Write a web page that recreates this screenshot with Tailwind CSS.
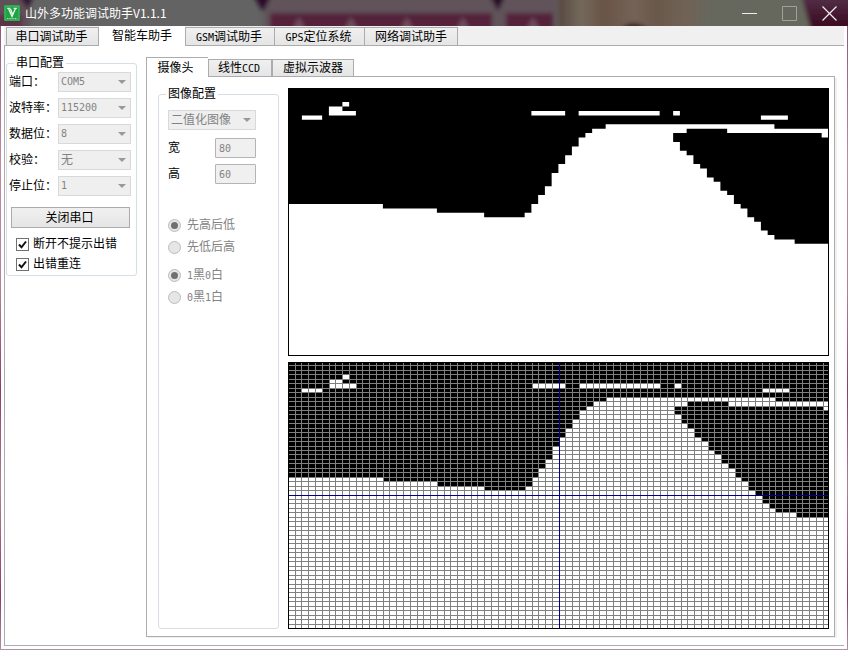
<!DOCTYPE html>
<html lang="zh-CN">
<head>
<meta charset="utf-8">
<title>山外多功能调试助手V1.1.1</title>
<script src="https://cdn.jsdelivr.net/npm/@tailwindcss/browser@4"></script>
</head>
<body class="flex min-h-screen flex-col bg-[linear-gradient(180deg,#8f4a6e,#c08ba5_25%,#b87c98_45%,#8d3b66_60%,#b87c98_75%,#8d3b66_92%,#b390a5)] font-['Liberation_Sans','Noto_Sans_CJK_SC',sans-serif] text-[12px] leading-4 text-black">

<header class="relative isolate flex h-[26px] shrink-0 items-center overflow-hidden bg-[#636363] pl-1 text-white">
  <svg class="absolute inset-0 -z-10 h-full w-full" viewBox="0 0 848 26" preserveAspectRatio="none" aria-hidden="true">
    <defs>
      <filter id="soft" x="-5%" y="-50%" width="110%" height="200%"><feGaussianBlur stdDeviation="2"/></filter>
      <linearGradient id="brown"><stop stop-color="#57483f"/><stop offset=".15" stop-color="#74695c"/><stop offset=".3" stop-color="#6a5448"/><stop offset=".5" stop-color="#746356"/><stop offset=".65" stop-color="#6a584b"/><stop offset=".85" stop-color="#706356"/><stop offset="1" stop-color="#66675d"/></linearGradient>
      <linearGradient id="wine" x2="0" y2="1"><stop stop-color="#54334a"/><stop offset="1" stop-color="#38041c"/></linearGradient>
    </defs>
    <g filter="url(#soft)">
      <path d="M-5-5H30V30H-5z" fill="#614f56"/>
      <path d="M-5 15H22V30H-5z" fill="#5b3346"/>
      <path d="M18-5h16l-6 14z" fill="#321730"/>
      <path d="M264-5H556V30H264z" fill="#61535a"/>
      <path d="M270 13H492V30H270zM506 13H553V30H506z" fill="#54223a"/>
      <path d="M292 30l7-13 7 13zM344 30l7-13 7 13zM400 30l7-13 7 13zM456 30l7-13 7 13zM526 30l7-13 7 13z" fill="#70505f"/>
      <path d="M253-5h19l-9 17zM489-5h17l-8 16z" fill="#2c0a2b"/>
      <path d="M558-5H710V30H558z" fill="url(#brown)"/>
      <path d="M620 30q12-14 30 0z" fill="#3c2327"/>
      <path d="M706-5H804L812 30H706z" fill="#66675d"/>
      <path d="M801-5H855V30H811z" fill="url(#wine)"/>
    </g>
  </svg>
  <svg class="h-4 w-4" viewBox="0 0 16 16" aria-hidden="true">
    <rect width="16" height="16" fill="#15983b"/>
    <rect x="1" y="1" width="14" height="14" fill="#20a346" stroke="#6fcb8c" stroke-width=".6"/>
    <path d="M3 3.300h3.500M9.500 3.300h3.500" stroke="#f2fff4"/>
    <path d="M4.500 3.500L8 11.500 11.500 3.500M6.500 4l2 5" fill="none" stroke="#f2fff4" stroke-width="1.200"/>
    <path d="M3 13.500h10" stroke="#a5dfb6" stroke-dasharray="1 .6"/>
  </svg>
  <h1 class="ml-[5px] flex-1 font-['Noto_Sans_CJK_SC',sans-serif]">山外多功能调试助手V1.1.1</h1>
  <div class="flex gap-6 pr-[10px]">
    <button type="button" aria-label="最小化" class="h-4 w-4"><svg viewBox="0 0 16 16" class="h-4 w-4"><path d="M0 8.500h15" stroke="#eee"/></svg></button>
    <button type="button" aria-label="最大化" class="h-4 w-4"><svg viewBox="0 0 16 16" class="h-4 w-4"><path d="M.5 1.500h14v14H.5z" fill="none" stroke="#a3a09c"/></svg></button>
    <button type="button" aria-label="关闭" class="h-4 w-4"><svg viewBox="0 0 16 16" class="h-4 w-4"><path d="M.5 1.500l14 14M14.500 1.500l-14 14" stroke="#f3edf0" stroke-width="1.200"/></svg></button>
  </div>
</header>

<div class="mx-px mb-px flex flex-1 flex-col bg-white px-[3px] pb-[3px]">
  <nav class="flex h-5 shrink-0 items-end border-b border-[#acacac] bg-[#f0f0f0] pl-[2px]">
    <button type="button" class="h-[18px] w-[93px] border border-b-0 border-[#acacac] bg-linear-to-b from-[#f0f0f0] to-[#e5e5e5] pr-[2px] pt-px">串口调试助手</button>
    <button type="button" class="-mb-px h-5 w-[86px] bg-white">智能车助手</button>
    <button type="button" class="h-[18px] w-[90px] border border-b-0 border-[#acacac] bg-linear-to-b from-[#f0f0f0] to-[#e5e5e5] pr-[2px] pt-px"><span class="font-['DejaVu_Sans_Mono',monospace] text-[10px]">GSM</span>调试助手</button>
    <button type="button" class="h-[18px] w-[90px] border border-b-0 border-l-0 border-[#acacac] bg-linear-to-b from-[#f0f0f0] to-[#e5e5e5] pr-[2px] pt-px"><span class="font-['DejaVu_Sans_Mono',monospace] text-[10px]">GPS</span>定位系统</button>
    <button type="button" class="h-[18px] w-[93px] border border-b-0 border-l-0 border-[#acacac] bg-linear-to-b from-[#f0f0f0] to-[#e5e5e5] pt-px">网络调试助手</button>
  </nav>

  <main class="flex flex-1 border-b border-l border-[#acacac] pr-[7px] pb-2 pl-px">
    <aside class="w-[131px] shrink-0 pt-[9px]">
      <fieldset class="rounded-[3px] border border-[#d5dfe5] pb-px">
        <legend class="ml-[7px] px-[2px]">串口配置</legend>
        <div class="flex flex-col gap-[6px] pt-px pr-[5px] pl-[2px]">
          <div class="flex h-5 items-center justify-between"><label for="port">端口：</label>
            <div class="relative"><select id="port" disabled class="block h-5 w-[73px] appearance-none border border-[#d9d9d9] bg-[#efefef] pl-[2px] font-['DejaVu_Sans_Mono',monospace] text-[10px] text-[#838383] opacity-100"><option>COM5</option></select><svg class="absolute top-2 right-[5px] h-1 w-2" viewBox="0 0 8 4"><path d="M0 0h8L4 4z" fill="#999"/></svg></div></div>
          <div class="flex h-5 items-center justify-between"><label for="baud">波特率：</label>
            <div class="relative"><select id="baud" disabled class="block h-5 w-[73px] appearance-none border border-[#d9d9d9] bg-[#efefef] pl-[2px] font-['DejaVu_Sans_Mono',monospace] text-[10px] text-[#838383] opacity-100"><option>115200</option></select><svg class="absolute top-2 right-[5px] h-1 w-2" viewBox="0 0 8 4"><path d="M0 0h8L4 4z" fill="#999"/></svg></div></div>
          <div class="flex h-5 items-center justify-between"><label for="bits">数据位：</label>
            <div class="relative"><select id="bits" disabled class="block h-5 w-[73px] appearance-none border border-[#d9d9d9] bg-[#efefef] pl-[2px] font-['DejaVu_Sans_Mono',monospace] text-[10px] text-[#838383] opacity-100"><option>8</option></select><svg class="absolute top-2 right-[5px] h-1 w-2" viewBox="0 0 8 4"><path d="M0 0h8L4 4z" fill="#999"/></svg></div></div>
          <div class="flex h-5 items-center justify-between"><label for="parity">校验：</label>
            <div class="relative"><select id="parity" disabled class="block h-5 w-[73px] appearance-none border border-[#d9d9d9] bg-[#efefef] pl-[2px] text-[#838383] opacity-100"><option>无</option></select><svg class="absolute top-2 right-[5px] h-1 w-2" viewBox="0 0 8 4"><path d="M0 0h8L4 4z" fill="#999"/></svg></div></div>
          <div class="flex h-5 items-center justify-between"><label for="stop">停止位：</label>
            <div class="relative"><select id="stop" disabled class="block h-5 w-[73px] appearance-none border border-[#d9d9d9] bg-[#efefef] pl-[2px] font-['DejaVu_Sans_Mono',monospace] text-[10px] text-[#838383] opacity-100"><option>1</option></select><svg class="absolute top-2 right-[5px] h-1 w-2" viewBox="0 0 8 4"><path d="M0 0h8L4 4z" fill="#999"/></svg></div></div>
        </div>
        <div class="mt-[11px] pr-[6px] pl-1"><button type="button" class="block h-[21px] w-full border border-[#acacac] bg-linear-to-b from-[#f0f0f0] to-[#e5e5e5] pr-[2px]">关闭串口</button></div>
        <div class="mt-[6px] flex flex-col pl-[9px]">
          <label class="flex h-5 items-center gap-1"><span class="relative h-[13px] w-[13px]"><input type="checkbox" checked class="block h-[13px] w-[13px] appearance-none border border-[#707070] bg-white"><svg class="pointer-events-none absolute inset-0 h-[13px] w-[13px]" viewBox="0 0 13 13"><path d="M3 6.500l2.500 2.800L10 3.500" fill="none" stroke="#111" stroke-width="2"/></svg></span>断开不提示出错</label>
          <label class="flex h-5 items-center gap-1"><span class="relative h-[13px] w-[13px]"><input type="checkbox" checked class="block h-[13px] w-[13px] appearance-none border border-[#707070] bg-white"><svg class="pointer-events-none absolute inset-0 h-[13px] w-[13px]" viewBox="0 0 13 13"><path d="M3 6.500l2.500 2.800L10 3.500" fill="none" stroke="#111" stroke-width="2"/></svg></span>出错重连</label>
        </div>
      </fieldset>
    </aside>

    <section class="ml-[9px] flex min-w-0 flex-1 flex-col pt-[11px]">
      <nav class="flex h-5 shrink-0 items-end">
        <button type="button" class="h-5 w-[62px] border-t border-l border-[#acacac] bg-white pr-1">摄像头</button>
        <div class="flex h-5 flex-1 items-end border-b border-[#acacac]">
          <button type="button" class="h-[17px] w-[64px] border border-b-0 border-[#acacac] bg-linear-to-b from-[#f0f0f0] to-[#e5e5e5] pr-[2px]">线性<span class="font-['DejaVu_Sans_Mono',monospace] text-[10px]">CCD</span></button>
          <button type="button" class="h-[17px] w-[82px] border border-b-0 border-[#acacac] bg-linear-to-b from-[#f0f0f0] to-[#e5e5e5]">虚拟示波器</button>
        </div>
        <div class="w-[2px]"></div>
      </nav>
      <div class="mr-[2px] flex flex-1 border border-t-0 border-[#acacac] pr-[5px] pb-[7px] pl-[11px] shadow-[2px_1px_0_#f0f0f0]">
        <fieldset class="mt-[9px] w-[121px] shrink-0 rounded-[3px] border border-[#d5dfe5]">
          <legend class="ml-[7px] px-[2px]">图像配置</legend>
          <div class="pr-[22px] pl-[9px] pt-2">
            <div class="relative"><select aria-label="图像类型" disabled class="block h-5 w-full appearance-none border border-[#d9d9d9] bg-[#efefef] pl-[2px] text-[#838383] opacity-100"><option>二值化图像</option></select><svg class="absolute top-2 right-[5px] h-1 w-2" viewBox="0 0 8 4"><path d="M0 0h8L4 4z" fill="#999"/></svg></div>
            <div class="mt-2 flex h-5 items-center justify-between"><label for="w">宽</label><input id="w" disabled value="80" class="h-5 w-[41px] rounded-[1px] border border-[#b4b4b4] bg-[#f0f0f0] pl-[3px] font-['DejaVu_Sans_Mono',monospace] text-[10px] text-[#838383]"></div>
            <div class="mt-[6px] flex h-5 items-center justify-between"><label for="h">高</label><input id="h" disabled value="60" class="h-5 w-[41px] rounded-[1px] border border-[#b4b4b4] bg-[#f0f0f0] pl-[3px] font-['DejaVu_Sans_Mono',monospace] text-[10px] text-[#838383]"></div>
            <div class="mt-[30px] text-[#838383]">
              <label class="flex h-[22px] items-center gap-[6px]"><input type="radio" name="order" disabled checked class="grid h-[13px] w-[13px] appearance-none place-items-center rounded-full border border-[#bcbcbc] bg-[#e6e6e6] before:h-[7px] before:w-[7px] before:rounded-full checked:before:bg-[#707070]">先高后低</label>
              <label class="flex h-[22px] items-center gap-[6px]"><input type="radio" name="order" disabled class="h-[13px] w-[13px] appearance-none rounded-full border border-[#bcbcbc] bg-[#e6e6e6]">先低后高</label>
            </div>
            <div class="mt-[6px] text-[#838383]">
              <label class="flex h-[22px] items-center gap-[6px]"><input type="radio" name="mode" disabled checked class="grid h-[13px] w-[13px] appearance-none place-items-center rounded-full border border-[#bcbcbc] bg-[#e6e6e6] before:h-[7px] before:w-[7px] before:rounded-full checked:before:bg-[#707070]"><span><span class="font-['DejaVu_Sans_Mono',monospace] text-[10px]">1</span>黑<span class="font-['DejaVu_Sans_Mono',monospace] text-[10px]">0</span>白</span></label>
              <label class="flex h-[22px] items-center gap-[6px]"><input type="radio" name="mode" disabled class="h-[13px] w-[13px] appearance-none rounded-full border border-[#bcbcbc] bg-[#e6e6e6]"><span><span class="font-['DejaVu_Sans_Mono',monospace] text-[10px]">0</span>黑<span class="font-['DejaVu_Sans_Mono',monospace] text-[10px]">1</span>白</span></label>
            </div>
          </div>
        </fieldset>
        <div class="ml-[9px] flex min-w-0 flex-1 flex-col gap-[6px] pt-[11px]">
          <svg class="block h-[268px] w-full" viewBox="0 0 541 268" preserveAspectRatio="none" role="img" aria-label="摄像头图像">
            <defs>
              <path id="frame" d="M0 26H14V27H22V28H29V29H35V28H36V26H37V24H38V22H39V19H40V17H41V15H42V13H43V11H44V10H45V9H47V8H72V9H81V11H79V10H65V9H59V10H57V12H58V14H59V15H60V17H61V18H62V20H63V21H64V23H65V24H66V26H67V27H68V29H69V30H70V32H71V33H72V34H75V35H81V61H0ZM2 6h3v1h-3zM8 3h1v1h-1zM6 4h2v1h2v1h-4zM36 5h5v1h-5zM43 5h12v1h-12zM57 5h1v1h-1zM70 6h4v1h-4z" fill="#fff"/>
            </defs>
            <rect width="541" height="268"/>
            <use href="#frame" transform="translate(.4 .8) scale(6.75 4.43)"/>
            <rect x=".5" y=".5" width="540" height="267" fill="none" stroke="#000"/>
          </svg>
          <svg class="block h-[267px] w-full" viewBox="0 0 541 267" preserveAspectRatio="none" shape-rendering="crispEdges" role="img" aria-label="像素网格图像">
            <rect width="541" height="267"/>
            <use href="#frame" transform="translate(.4 -.5) scale(6.77 4.45)"/>
            <path id="grid" stroke="#808080"/>
            <path id="axis" stroke="#00008b"/>
            <rect x=".5" y=".5" width="540" height="266" fill="none" stroke="#000"/>
          </svg>
        </div>
      </div>
    </section>
  </main>
</div>

<script>
  // 80 x 60 pixel grid with centre axes
  const colX = k => Math.floor(0.4 + 6.77 * k) + 0.5;
  const rowY = k => Math.floor(-0.5 + 4.45 * k) + 0.5;
  let d = '';
  for (let k = 1; k < 80; k++) d += `M${colX(k)} 0V267`;
  for (let k = 1; k < 60; k++) d += `M0 ${rowY(k)}H541`;
  document.getElementById('grid').setAttribute('d', d);
  document.getElementById('axis').setAttribute('d', `M${colX(40)} 0V267M0 ${rowY(30)}H541`);
</script>
</body>
</html>
